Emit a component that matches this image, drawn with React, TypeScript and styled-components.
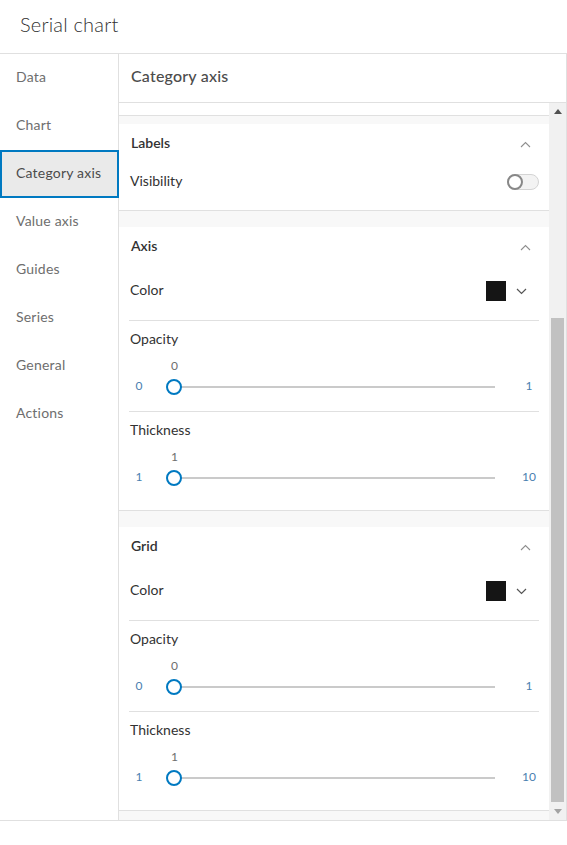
import React from "react";
import styled, { createGlobalStyle } from "styled-components";

const Global = createGlobalStyle`
  html, body { margin: 0; padding: 0; background: #fff; }
  body { font-family: "Lato", "Open Sans", sans-serif; -webkit-font-smoothing: antialiased; }
  * { box-sizing: border-box; }
`;

const Page = styled.div`
  width: 567px;
  display: flex;
  flex-direction: column;
`;

const TopBar = styled.header`
  height: 54px;
  display: flex;
  align-items: center;
  padding: 0 0 5px 20px;
  border-bottom: 1px solid #e0e0e0;
  font-size: 20px;
  font-weight: 300;
  color: #323232;
  letter-spacing: 0.2px;
`;

const Main = styled.div`
  display: flex;
  height: 767px;
  border-bottom: 1px solid #e0e0e0;
`;

const Sidebar = styled.nav`
  width: 119px;
  flex: none;
  border-right: 1px solid #e0e0e0;
  display: flex;
  flex-direction: column;
`;

const NavItem = styled.div<{ $active?: boolean }>`
  height: 48px;
  display: flex;
  align-items: center;
  padding-bottom: 4px;
  font-size: 14px;
  letter-spacing: 0.2px;
  color: ${(p) => (p.$active ? "#4c4c4c" : "#6e6e6e")};
  background: ${(p) => (p.$active ? "#eaeaea" : "transparent")};
  border: 2px solid ${(p) => (p.$active ? "#0079c1" : "transparent")};
  border-left-width: ${(p) => (p.$active ? "2px" : "0")};
  padding-left: ${(p) => (p.$active ? "14px" : "16px")};
  margin-right: ${(p) => (p.$active ? "-1px" : "0")};
`;

const Panel = styled.section`
  flex: 1;
  display: flex;
  flex-direction: column;
  border-right: 1px solid #e0e0e0;
  min-width: 0;
`;

const PanelTitle = styled.div`
  height: 49px;
  flex: none;
  display: flex;
  align-items: center;
  padding: 0 0 5px 12px;
  border-bottom: 1px solid #e0e0e0;
  font-size: 16px;
  font-weight: 500;
  color: #4c4c4c;
  letter-spacing: 0.2px;
`;

const ScrollArea = styled.div`
  flex: 1;
  display: flex;
  min-height: 0;
`;

const Content = styled.div`
  flex: 1;
  overflow: hidden;
  background: #f8f8f8;
  display: flex;
  flex-direction: column;
  gap: 16px;
`;

const Stub = styled.div`
  height: 13px;
  flex: none;
  background: #fff;
  border-bottom: 1px solid #e0e0e0;
  margin-bottom: -8px;
`;

const Section = styled.div`
  flex: none;
  background: #fff;
  border-bottom: 1px solid #e0e0e0;
  padding: 0 10px 8px 10px;
`;

const SectionHeader = styled.div`
  height: 40px;
  display: flex;
  align-items: center;
  justify-content: space-between;
  padding: 0 8px 0 2px;
  font-size: 14px;
  font-weight: 600;
  color: #323232;
`;

const Text = styled.span`
  margin-top: -3px;
`;

const Row = styled.div<{ $h: number; $pt?: number; $pb?: number; $divider?: boolean }>`
  height: ${(p) => p.$h}px;
  padding-top: ${(p) => p.$pt ?? 0}px;
  padding-bottom: ${(p) => p.$pb ?? 0}px;
  box-sizing: content-box;
  display: flex;
  align-items: center;
  justify-content: space-between;
  font-size: 14px;
  color: #323232;
  border-bottom: ${(p) => (p.$divider ? "1px solid #e0e0e0" : "none")};
  padding-left: 1px;
`;

const Toggle = styled.div`
  width: 32px;
  height: 16px;
  border: 1px solid #d4d4d4;
  border-radius: 8px;
  background: #f3f3f3;
  position: relative;
`;

const Knob = styled.div`
  position: absolute;
  left: -1px;
  top: -1px;
  width: 16px;
  height: 16px;
  border-radius: 50%;
  border: 2px solid #888;
  background: #fff;
`;

const ColorPick = styled.div`
  display: flex;
  align-items: center;
  gap: 10px;
  padding-right: 12px;
`;

const Swatch = styled.div<{ $c: string }>`
  width: 20px;
  height: 20px;
  background: ${(p) => p.$c};
`;

const Block = styled.div<{ $divider?: boolean; $pb: number }>`
  padding-top: 9px;
  padding-bottom: ${(p) => p.$pb}px;
  border-bottom: ${(p) => (p.$divider ? "1px solid #e0e0e0" : "none")};
`;

const BlockLabel = styled.div`
  height: 20px;
  line-height: 18px;
  font-size: 14px;
  color: #323232;
  padding-left: 1px;
`;

const ValueRow = styled.div`
  height: 16px;
  margin: 9px 44px 0 38px;
  position: relative;
`;

const ValueTag = styled.span`
  position: absolute;
  top: 0;
  width: 15px;
  margin-left: -7px;
  text-align: center;
  font-size: 12px;
  line-height: 14px;
  color: #6e6e6e;
`;

const SliderRow = styled.div`
  display: grid;
  grid-template-columns: 20px 1fr 20px;
  align-items: center;
`;

const Edge = styled.span`
  height: 24px;
  line-height: 22px;
  text-align: center;
  font-size: 12px;
  color: #4a7fb0;
`;

const Track = styled.div`
  height: 24px;
  margin: 0 24px 0 18px;
  position: relative;
  &::before {
    content: "";
    position: absolute;
    left: 0;
    right: 0;
    top: 11px;
    height: 2px;
    background: #cacaca;
  }
`;

const Thumb = styled.div`
  position: absolute;
  top: 4px;
  width: 16px;
  height: 16px;
  margin-left: -1px;
  border-radius: 50%;
  border: 2px solid #0079c1;
  background: #fff;
`;

const ScrollBar = styled.div`
  width: 17px;
  flex: none;
  background: #f1f1f1;
  display: flex;
  flex-direction: column;
  align-items: center;
`;

const ArrowBox = styled.div`
  height: 17px;
  width: 17px;
  display: flex;
  align-items: center;
  justify-content: center;
  flex: none;
`;

const ScrollThumb = styled.div<{ $top: number; $h: number }>`
  margin-top: ${(p) => p.$top}px;
  height: ${(p) => p.$h}px;
  width: 13px;
  background: #c1c1c1;
  flex: none;
`;

const Spacer = styled.div`
  flex: 1;
`;

const ChevronUp = () => (
  <svg width="11" height="7" viewBox="0 0 11 7">
    <path d="M1 6 L5.5 1.5 L10 6" fill="none" stroke="#8f8f8f" strokeWidth="1.1" />
  </svg>
);

const ChevronDown = () => (
  <svg width="11" height="7" viewBox="0 0 11 7">
    <path d="M1 1 L5.5 5.5 L10 1" fill="none" stroke="#555" strokeWidth="1.2" />
  </svg>
);

type SliderProps = { label: string; min: number; max: number; value: number; divider?: boolean; pb: number };

const Slider = ({ label, min, max, value, divider, pb }: SliderProps) => {
  const pct = ((value - min) / (max - min)) * 100;
  return (
    <Block $divider={divider} $pb={pb}>
      <BlockLabel>{label}</BlockLabel>
      <ValueRow>
        <ValueTag style={{ left: `calc(${pct}% + 7px)` }}>{value}</ValueTag>
      </ValueRow>
      <SliderRow>
        <Edge>{min}</Edge>
        <Track>
          <Thumb style={{ left: `${pct}%` }} />
        </Track>
        <Edge>{max}</Edge>
      </SliderRow>
    </Block>
  );
};

const StyleSection = ({ title }: { title: string }) => (
  <Section>
    <SectionHeader>
      <Text>{title}</Text>
      <ChevronUp />
    </SectionHeader>
    <Row $h={24} $pt={12} $pb={17} $divider>
      <Text>Color</Text>
      <ColorPick>
        <Swatch $c="#151515" />
        <ChevronDown />
      </ColorPick>
    </Row>
    <Slider label="Opacity" min={0} max={1} value={0} divider pb={12} />
    <Slider label="Thickness" min={1} max={10} value={1} pb={12} />
  </Section>
);

const navItems = ["Data", "Chart", "Category axis", "Value axis", "Guides", "Series", "General", "Actions"];

export default function App() {
  return (
    <Page>
      <Global />
      <TopBar>Serial chart</TopBar>
      <Main>
        <Sidebar>
          {navItems.map((n) => (
            <NavItem key={n} $active={n === "Category axis"}>
              {n}
            </NavItem>
          ))}
        </Sidebar>
        <Panel>
          <PanelTitle>Category axis</PanelTitle>
          <ScrollArea>
            <Content>
              <Stub />
              <Section>
                <SectionHeader>
                  <Text>Labels</Text>
                  <ChevronUp />
                </SectionHeader>
                <Row $h={36} $pb={2}>
                  <Text>Visibility</Text>
                  <Toggle>
                    <Knob />
                  </Toggle>
                </Row>
              </Section>
              <StyleSection title="Axis" />
              <StyleSection title="Grid" />
            </Content>
            <ScrollBar>
              <ArrowBox>
                <svg width="8" height="5" viewBox="0 0 8 5">
                  <path d="M0 5 L4 0 L8 5 Z" fill="#505050" />
                </svg>
              </ArrowBox>
              <ScrollThumb $top={198} $h={484} />
              <Spacer />
              <ArrowBox>
                <svg width="8" height="5" viewBox="0 0 8 5">
                  <path d="M0 0 L8 0 L4 5 Z" fill="#a3a3a3" />
                </svg>
              </ArrowBox>
            </ScrollBar>
          </ScrollArea>
        </Panel>
      </Main>
    </Page>
  );
}
